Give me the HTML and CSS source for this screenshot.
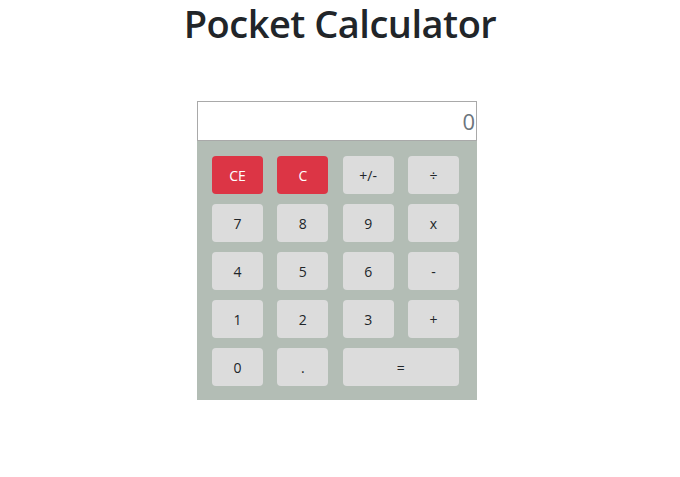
FILE: index.html
```html
<!DOCTYPE html>
<html lang="en">
<head>
<meta charset="utf-8">
<title>Pocket Calculator</title>
<link rel="stylesheet" href="styles.css">
</head>
<body>
<h1 class="title">Pocket Calculator</h1>
<div class="calc">
  <div class="display">0</div>
  <div class="keys">
    <button class="key key-danger">CE</button>
    <button class="key key-danger">C</button>
    <button class="key">+/-</button>
    <button class="key">÷</button>
    <button class="key">7</button>
    <button class="key">8</button>
    <button class="key">9</button>
    <button class="key">x</button>
    <button class="key">4</button>
    <button class="key">5</button>
    <button class="key">6</button>
    <button class="key">-</button>
    <button class="key">1</button>
    <button class="key">2</button>
    <button class="key">3</button>
    <button class="key">+</button>
    <button class="key">0</button>
    <button class="key">.</button>
    <button class="key key-wide">=</button>
  </div>
</div>
</body>
</html>
```
FILE: styles.css
```css
* { box-sizing: border-box; }
body {
  margin: 0;
  font-family: "Open Sans", "Noto Sans", sans-serif;
  color: #212529;
  background: #fff;
}
.title {
  margin: 0 0 55px;
  font-size: 38px;
  line-height: 46px;
  letter-spacing: -0.5px;
  font-weight: 600;
  text-align: center;
  color: #212529;
}
.calc {
  width: 280px;
  margin-left: calc(50% - 143px);
}
.display {
  height: 40px;
  border: 1px solid #a9a9a9;
  background: #fff;
  text-align: right;
  font-size: 22px;
  line-height: 38px;
  color: #6c757d;
  padding-right: 1px;
}
.keys {
  background: #b3bdb5;
  padding: 15px 18px 14px 15px;
  display: grid;
  grid-template-columns: repeat(4, 51px);
  column-gap: 14.33px;
  row-gap: 10px;
}
.key {
  height: 38px;
  border: none;
  border-radius: 4px;
  background: #dcdcdc;
  color: #212529;
  font-family: "Open Sans", "Noto Sans", sans-serif;
  font-size: 14px;
  padding: 0;
}
.key-danger {
  background: #dc3545;
  color: #fff;
}
.key-wide {
  grid-column: span 2;
}
```
